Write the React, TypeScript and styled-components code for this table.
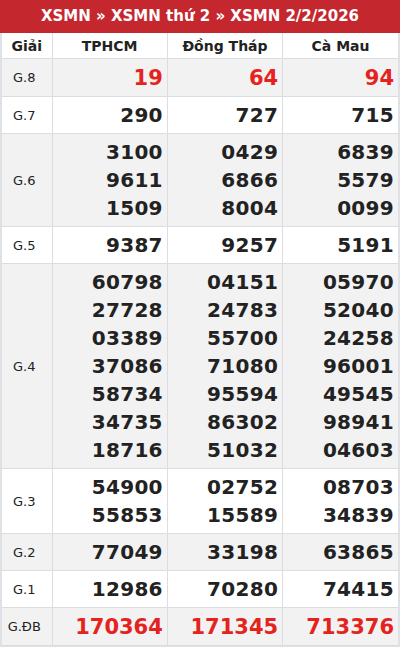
import React from "react";
import styled, { createGlobalStyle } from "styled-components";

const Global = createGlobalStyle`
  html, body { margin: 0; padding: 0; background: #fff; }
  body { font-family: "DejaVu Sans", Verdana, sans-serif; }
`;

const Wrap = styled.div`
  width: 400px;
  box-sizing: border-box;
  border: 2px solid #dfe1e6;
  border-top: none;
`;

const Title = styled.div`
  background: #c5272f;
  color: #fff;
  font-weight: bold;
  font-size: 15px;
  height: 33px;
  line-height: 33px;
  text-align: center;
  margin: 0 -2px;
`;

const Table = styled.table`
  width: 100%;
  border-collapse: collapse;
  table-layout: fixed;
`;

const Head = styled.th`
  font-size: 14px;
  font-weight: bold;
  color: #222;
  height: 25px;
  padding: 0;
  text-align: center;
  border-left: 1px solid #dcdde1;
  border-bottom: 1px solid #dcdde1;
  &:first-child { border-left: none; }
`;

const Row = styled.tr<{ $alt: boolean }>`
  background: ${(p) => (p.$alt ? "#f2f2f3" : "#ffffff")};
`;

const Label = styled.td`
  font-size: 13px;
  color: #222;
  text-align: center;
  padding: 4px 5px 4px 0;
  border-bottom: 1px solid #dcdde1;
`;

const Cell = styled.td<{ $red: boolean }>`
  font-size: ${(p) => (p.$red ? "21px" : "20px")};
  font-weight: bold;
  line-height: 28px;
  letter-spacing: ${(p) => (p.$red ? "0" : "0.3px")};
  color: ${(p) => (p.$red ? "#e5231d" : "#222")};
  text-align: right;
  padding: ${(p) => (p.$red ? "5px 4px 4px 0" : "4px 4px 4px 0")};
  border-left: 1px solid #dcdde1;
  border-bottom: 1px solid #dcdde1;
  vertical-align: middle;
`;

const Num = styled.div``;

type Prize = { label: string; red?: boolean; values: string[][] };

const prizes: Prize[] = [
  { label: "G.8", red: true, values: [["19"], ["64"], ["94"]] },
  { label: "G.7", values: [["290"], ["727"], ["715"]] },
  {
    label: "G.6",
    values: [
      ["3100", "9611", "1509"],
      ["0429", "6866", "8004"],
      ["6839", "5579", "0099"],
    ],
  },
  { label: "G.5", values: [["9387"], ["9257"], ["5191"]] },
  {
    label: "G.4",
    values: [
      ["60798", "27728", "03389", "37086", "58734", "34735", "18716"],
      ["04151", "24783", "55700", "71080", "95594", "86302", "51032"],
      ["05970", "52040", "24258", "96001", "49545", "98941", "04603"],
    ],
  },
  {
    label: "G.3",
    values: [
      ["54900", "55853"],
      ["02752", "15589"],
      ["08703", "34839"],
    ],
  },
  { label: "G.2", values: [["77049"], ["33198"], ["63865"]] },
  { label: "G.1", values: [["12986"], ["70280"], ["74415"]] },
  { label: "G.ĐB", red: true, values: [["170364"], ["171345"], ["713376"]] },
];

export default function App() {
  return (
    <>
      <Global />
      <Wrap>
        <Title>XSMN » XSMN thứ 2 » XSMN 2/2/2026</Title>
        <Table>
          <colgroup>
            <col style={{ width: 50 }} />
            <col />
            <col />
            <col />
          </colgroup>
          <thead>
            <tr>
              <Head>Giải</Head>
              <Head>TPHCM</Head>
              <Head>Đồng Tháp</Head>
              <Head>Cà Mau</Head>
            </tr>
          </thead>
          <tbody>
            {prizes.map((p, i) => (
              <Row key={p.label} $alt={i % 2 === 0}>
                <Label>{p.label}</Label>
                {p.values.map((col, j) => (
                  <Cell key={j} $red={!!p.red}>
                    {col.map((v) => (
                      <Num key={v}>{v}</Num>
                    ))}
                  </Cell>
                ))}
              </Row>
            ))}
          </tbody>
        </Table>
      </Wrap>
    </>
  );
}
